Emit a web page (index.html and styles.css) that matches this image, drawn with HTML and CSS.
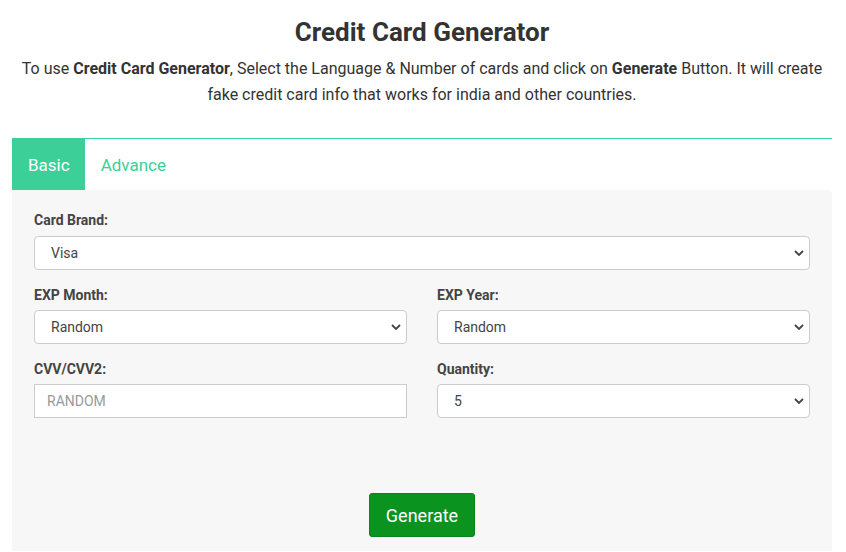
FILE: index.html
```html
<!DOCTYPE html>
<html lang="en">
<head>
<meta charset="utf-8">
<title>Credit Card Generator</title>
<link rel="stylesheet" href="styles.css">
</head>
<body>
<div class="page">
  <h1 class="title">Credit Card Generator</h1>
  <p class="intro">To use <b>Credit Card Generator</b>, Select the Language &amp; Number of cards and click on <b>Generate</b> Button. It will create fake credit card info that works for india and other countries.</p>
  <div class="tabs">
    <div class="tab active">Basic</div>
    <div class="tab">Advance</div>
  </div>
  <div class="panel">
    <div class="group">
      <label class="label">Card Brand:</label>
      <div class="select-wrap">
        <select class="field"><option>Visa</option></select>
        <svg class="chev" viewBox="0 0 10 6" width="10" height="6"><path d="M1 1l4 4 4-4" fill="none" stroke="#444" stroke-width="1.8"/></svg>
      </div>
    </div>
    <div class="row">
      <div class="group">
        <label class="label">EXP Month:</label>
        <div class="select-wrap">
          <select class="field"><option>Random</option></select>
          <svg class="chev" viewBox="0 0 10 6" width="10" height="6"><path d="M1 1l4 4 4-4" fill="none" stroke="#444" stroke-width="1.8"/></svg>
        </div>
      </div>
      <div class="group">
        <label class="label">EXP Year:</label>
        <div class="select-wrap">
          <select class="field"><option>Random</option></select>
          <svg class="chev" viewBox="0 0 10 6" width="10" height="6"><path d="M1 1l4 4 4-4" fill="none" stroke="#444" stroke-width="1.8"/></svg>
        </div>
      </div>
    </div>
    <div class="row">
      <div class="group">
        <label class="label">CVV/CVV2:</label>
        <input class="field input" type="text" placeholder="RANDOM">
      </div>
      <div class="group">
        <label class="label">Quantity:</label>
        <div class="select-wrap">
          <select class="field"><option>5</option></select>
          <svg class="chev" viewBox="0 0 10 6" width="10" height="6"><path d="M1 1l4 4 4-4" fill="none" stroke="#444" stroke-width="1.8"/></svg>
        </div>
      </div>
    </div>
    <div class="actions">
      <button class="btn" type="button">Generate</button>
    </div>
  </div>
</div>
</body>
</html>
```
FILE: styles.css
```css
* { box-sizing: border-box; }
html, body { margin: 0; padding: 0; background: #fff; }
body {
  font-family: Roboto, "Liberation Sans", Arial, sans-serif;
  color: #333;
}
.page {
  padding: 0 14px 0 12px;
}
.title {
  margin: 0;
  padding-top: 16px;
  font-size: 26px;
  line-height: 32px;
  font-weight: 700;
  text-align: center;
  color: #333;
}
.intro {
  margin: 8px 0 0;
  font-size: 16px;
  line-height: 26px;
  text-align: center;
  color: #333;
}
.intro b { font-weight: 700; }
.tabs {
  margin-top: 30px;
  display: flex;
  border-top: 1px solid #3ccf98;
}
.tab {
  height: 51px;
  padding: 0 16px 0 16px;
  display: flex;
  align-items: center;
  font-size: 17px;
  color: #3ccf98;
}
.tab.active {
  background: #3ccf98;
  color: #fff;
  padding: 0 15px 0 16px;
}
.panel {
  background: #f7f7f7;
  border-top-right-radius: 5px;
  padding: 20px 22px 14px;
}
.row {
  display: grid;
  grid-template-columns: 1fr 1fr;
  column-gap: 30px;
}
.group {
  margin-bottom: 15px;
}
.label {
  display: block;
  font-size: 14px;
  line-height: 20px;
  font-weight: 700;
  color: #444;
  margin-bottom: 6px;
}
.row .label { margin-bottom: 5px; }
.select-wrap {
  position: relative;
}
.field {
  display: block;
  width: 100%;
  height: 34px;
  margin: 0;
  padding: 0 30px 0 16px;
  font-family: Roboto, "Liberation Sans", Arial, sans-serif;
  font-size: 14px;
  color: #444;
  background: #fff;
  border: 1px solid #ccc;
  border-radius: 4px;
  -webkit-appearance: none;
  appearance: none;
  outline: none;
}
.input {
  border-radius: 0;
  padding-left: 12px;
}
.input::placeholder { color: #999; }
.chev {
  position: absolute;
  right: 6px;
  top: 14px;
  pointer-events: none;
}
.actions {
  display: flex;
  justify-content: center;
  padding-top: 60px;
}
.btn {
  height: 44px;
  padding: 0 16px;
  font-family: Roboto, "Liberation Sans", Arial, sans-serif;
  font-size: 18px;
  color: #fff;
  background: #0a931f;
  border: 1px solid #08861b;
  border-radius: 3px;
}
```
